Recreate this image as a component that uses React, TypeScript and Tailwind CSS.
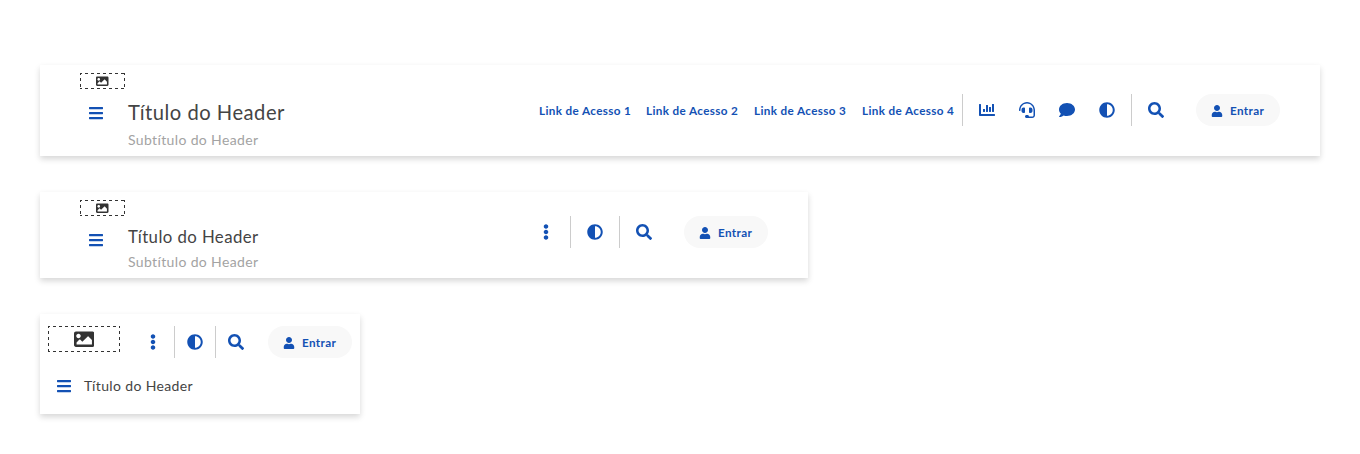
import type { ReactNode } from "react";
import { FaBars, FaImage, FaChartBar, FaHeadset, FaComment, FaAdjust, FaSearch, FaUser, FaEllipsisV } from "react-icons/fa";

const card = "bg-white shadow-[0_3px_6px_rgba(0,0,0,0.16)] font-['Lato',sans-serif]";

function Logo({ large = false }: { large?: boolean }) {
  const w = large ? 72 : 45;
  const h = large ? 26 : 16;
  return (
    <div className={large ? "grid h-[26px] w-[72px]" : "grid h-4 w-[45px]"}>
      <svg width={w} height={h} className="col-start-1 row-start-1">
        <g stroke="#333" strokeDasharray="3 3" strokeDashoffset="1">
          <path d={`M0 0.5H${w}`} />
          <path d={`M0.5 0V${h}`} />
          <path d={`M${w - 0.5} 0V${h}`} />
          <path d={`M0 ${h - 0.5}H${w}`} />
        </g>
      </svg>
      <span className="col-start-1 row-start-1 flex items-center justify-center pt-px text-[#333]">
        <FaImage size={large ? 20.5 : 12.5} />
      </span>
    </div>
  );
}

function Icon({ children }: { children: ReactNode }) {
  return <span className="flex h-8 w-8 items-center justify-center text-base text-[#1351b4]">{children}</span>;
}

function Divider() {
  return <span className="h-8 w-px bg-[#ccc]" />;
}

function Entrar() {
  return (
    <button className="flex h-8 w-[84px] items-center rounded-full bg-[#f8f8f8] pl-[15px] text-[#1351b4]">
      <FaUser size={12} className="mt-px" />
      <span className="-mt-px ml-[7px] text-[11.7px] leading-4 font-bold tracking-[0.36px]">Entrar</span>
    </button>
  );
}

const links = ["Link de Acesso 1", "Link de Acesso 2", "Link de Acesso 3", "Link de Acesso 4"];

export default function App() {
  return (
    <div className="flex h-[454px] w-[1360px] flex-col items-start overflow-hidden bg-white pt-[65px] pl-10">
      <header className={`${card} flex h-[91px] w-[1280px] justify-between px-10`}>
        <div className="pt-2">
          <Logo />
          <div className="flex pt-2">
            <Icon><FaBars /></Icon>
            <div className="pl-4">
              <h1 className="h-8 text-[20.2px] leading-[31px] tracking-[0.5px] whitespace-nowrap text-[#444]">Título do Header</h1>
              <p className="text-sm leading-[22px] tracking-[0.36px] whitespace-nowrap text-[#a3a3a3]">Subtítulo do Header</p>
            </div>
          </div>
        </div>
        <div className="mt-[29px] flex h-8 items-center">
          <nav className="flex gap-4 pr-2">
            {links.map((l) => (
              <a key={l} className="w-[92px] pb-px text-[11.7px] leading-4 font-bold tracking-[0.36px] whitespace-nowrap text-[#1351b4] first:w-[91px]">{l}</a>
            ))}
          </nav>
          <Divider />
          <div className="flex gap-2 px-2">
            <Icon><FaChartBar /></Icon>
            <Icon><FaHeadset /></Icon>
            <Icon><FaComment /></Icon>
            <Icon><FaAdjust /></Icon>
          </div>
          <Divider />
          <div className="pr-6 pl-2"><Icon><FaSearch /></Icon></div>
          <Entrar />
        </div>
      </header>

      <header className={`${card} mt-9 flex h-[86px] w-[768px] justify-between px-10`}>
        <div className="pt-2">
          <Logo />
          <div className="flex pt-2">
            <Icon><FaBars /></Icon>
            <div className="pl-4">
              <h1 className="h-[27px] text-[16.8px] leading-[26px] tracking-[0.42px] whitespace-nowrap text-[#444]">Título do Header</h1>
              <p className="text-sm leading-[22px] tracking-[0.36px] whitespace-nowrap text-[#a3a3a3]">Subtítulo do Header</p>
            </div>
          </div>
        </div>
        <div className="mt-6 flex h-8 items-center">
          <div className="pr-2"><Icon><FaEllipsisV /></Icon></div>
          <Divider />
          <div className="px-2"><Icon><FaAdjust /></Icon></div>
          <Divider />
          <div className="pr-6 pl-2"><Icon><FaSearch /></Icon></div>
          <Entrar />
        </div>
      </header>

      <header className={`${card} mt-9 h-[100px] w-80 px-2 pt-3`}>
        <div className="flex justify-between">
          <Logo large />
          <div className="flex h-8 items-center">
            <div className="pr-[5px]"><Icon><FaEllipsisV /></Icon></div>
            <Divider />
            <div className="px-1"><Icon><FaAdjust /></Icon></div>
            <Divider />
            <div className="pr-4 pl-1"><Icon><FaSearch /></Icon></div>
            <Entrar />
          </div>
        </div>
        <div className="flex items-center pt-3">
          <Icon><FaBars /></Icon>
          <h1 className="pl-1 text-sm leading-8 tracking-[0.35px] text-[#444]">Título do Header</h1>
        </div>
      </header>
    </div>
  );
}
